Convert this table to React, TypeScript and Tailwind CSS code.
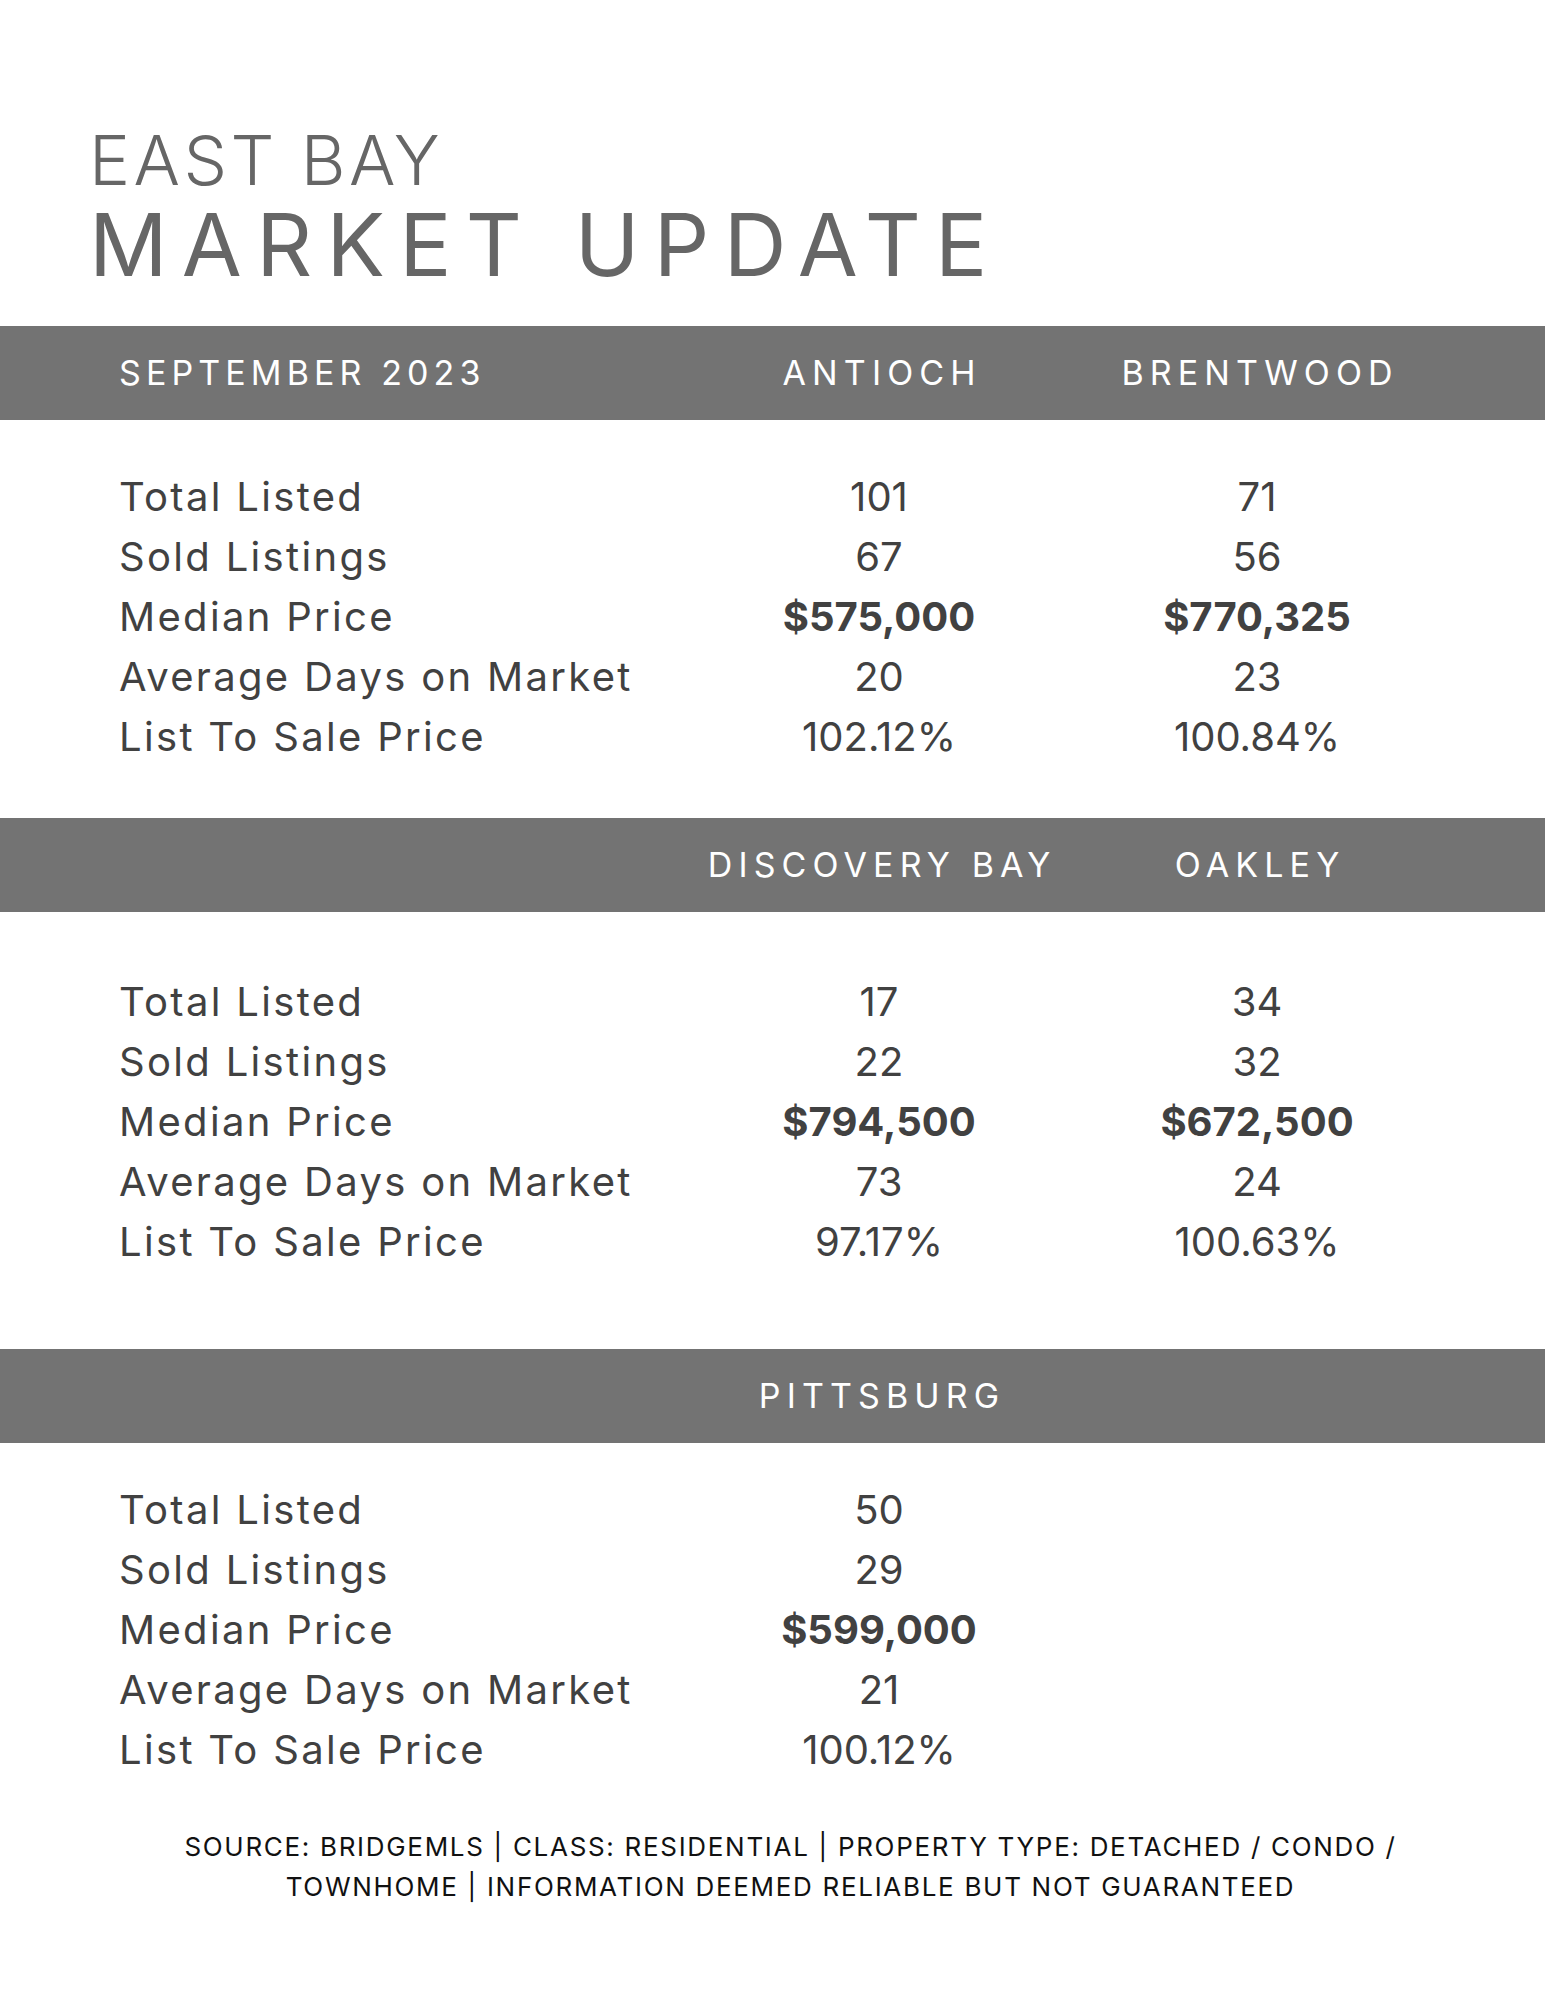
const sections = [
  {
    heads: ['ANTIOCH', 'BRENTWOOD'],
    first: 'SEPTEMBER 2023',
    cols: [
      ['101', '67', '$575,000', '20', '102.12%'],
      ['71', '56', '$770,325', '23', '100.84%'],
    ],
    body: 'pt-[47px] pb-[51px]',
  },
  {
    heads: ['DISCOVERY BAY', 'OAKLEY'],
    first: '',
    cols: [
      ['17', '22', '$794,500', '73', '97.17%'],
      ['34', '32', '$672,500', '24', '100.63%'],
    ],
    body: 'pt-[60px] pb-[77px]',
  },
  {
    heads: ['PITTSBURG', ''],
    first: '',
    cols: [['50', '29', '$599,000', '21', '100.12%'], []],
    body: 'pt-[37px] pb-[47px]',
  },
];

const labels = ['Total Listed', 'Sold Listings', 'Median Price', 'Average Days on Market', 'List To Sale Price'];

function Section({ s }: { s: (typeof sections)[number] }) {
  return (
    <section>
      <div className="h-[94px] bg-[#737373] pl-[119px] grid grid-cols-[571px_378px_378px] items-center text-white text-[34px] leading-none">
        <div className="tracking-[0.15em]">{s.first}</div>
        <div className="text-center tracking-[0.18em] pl-[0.18em]">{s.heads[0]}</div>
        <div className="text-center tracking-[0.18em] pl-[0.18em]">{s.heads[1]}</div>
      </div>
      <div className={`pl-[119px] grid grid-cols-[571px_378px_378px] text-[40px] leading-[60px] text-[#414141] ${s.body}`}>
        <div className="tracking-[0.058em]">
          {labels.map((l) => (
            <div key={l}>{l}</div>
          ))}
        </div>
        {s.cols.map((col, ci) => (
          <div key={ci} className="text-center">
            {col.map((v, i) => (
              <div key={i} className={i === 2 ? 'font-bold' : ''}>
                {v}
              </div>
            ))}
          </div>
        ))}
      </div>
    </section>
  );
}

export default function App() {
  return (
    <div className="w-[1545px] min-h-[2000px] bg-white font-['Inter',sans-serif]">
      <header className="pt-[126px] pb-[38px] pl-[89px] text-[#666666]">
        <h1 className="text-[69px] leading-none font-light tracking-[0.05em]">EAST BAY</h1>
        <h2 className="mt-[6px] text-[87px] leading-none font-normal tracking-[0.164em]">MARKET UPDATE</h2>
      </header>
      {sections.map((s, i) => (
        <Section key={i} s={s} />
      ))}
      <footer className="pl-[36px] text-center text-[26px] leading-[40px] tracking-[0.065em] text-[#111111]">
        SOURCE: BRIDGEMLS | CLASS: RESIDENTIAL | PROPERTY TYPE: DETACHED / CONDO /
        <br />
        TOWNHOME | INFORMATION DEEMED RELIABLE BUT NOT GUARANTEED
      </footer>
    </div>
  );
}
